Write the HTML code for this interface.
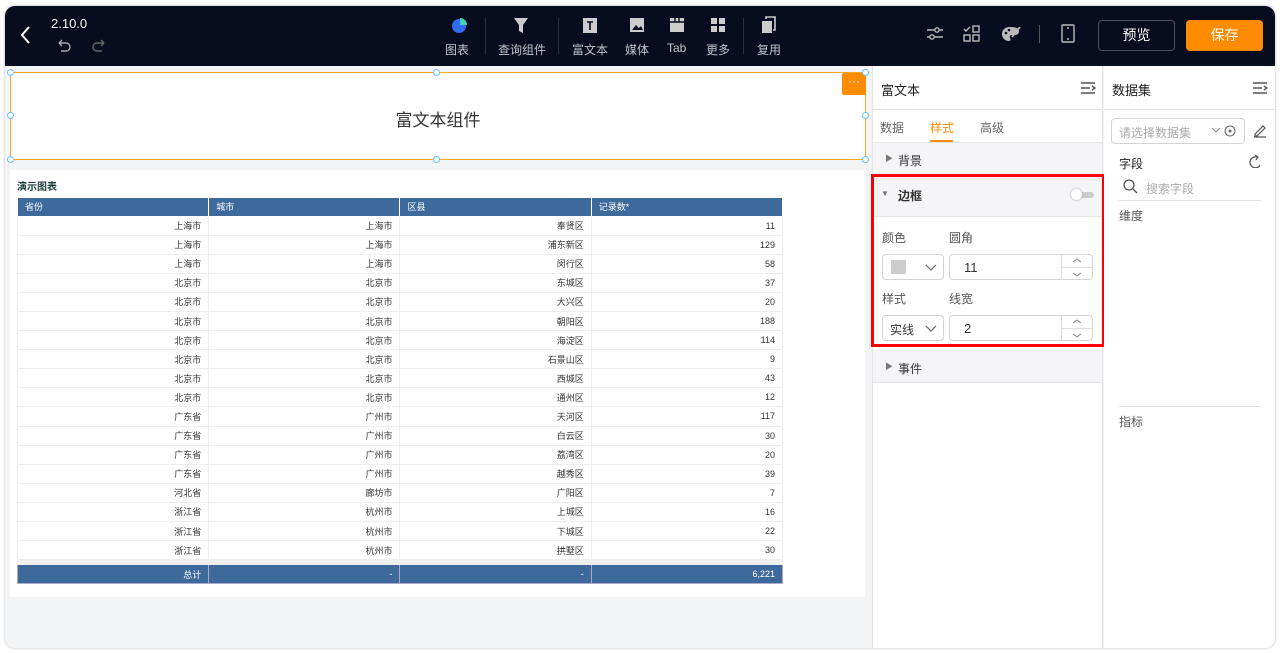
<!DOCTYPE html>
<html><head><meta charset="utf-8"><style>
*{box-sizing:border-box;margin:0;padding:0}
body{width:1280px;height:653px;background:#fff;font-family:"Liberation Sans","Noto Sans CJK SC",sans-serif;position:relative;overflow:hidden}
.a{position:absolute}
#frame{left:5px;top:6px;width:1270px;height:642px;border-radius:10px;overflow:hidden;background:#f3f4f6;box-shadow:0 0 3px #bbb}
#top{left:0;top:0;width:1270px;height:60px;background:#070d1e;color:#fff}
.tb{color:#bfc3cc;font-size:12px;text-align:center}
.sep{width:1px;background:#2b3142}
table{border-collapse:collapse;font-size:9px;font-family:"Liberation Sans","Noto Sans CJK SC",sans-serif}
td{height:19.1px;border:1px solid #eee;text-align:right;padding-right:7px;color:#333;width:191.5px}
th{height:18px;background:#3d6a9b;color:#fff;text-align:left;padding-left:7px;font-weight:normal;border:1px solid #fff;border-top:none}
.tot td{background:#3d6a9b;color:#fff;height:19px;border:1px solid #aac}
.h{width:7px;height:7px;border:1px solid #6bc1f2;border-radius:50%;background:#fff}
.lbl{font-size:12px;color:#555}
.box{border:1px solid #d4d4d4;border-radius:4px;background:#fff}
</style></head><body>
<div class="a" id="frame">
<div class="a" id="top">
 <svg class="a" style="left:15px;top:19px" width="12" height="20"><path d="M9 2L2 10l7 8" stroke="#fff" stroke-width="2" fill="none"/></svg>
 <div class="a" style="left:46px;top:10px;font-size:13px">2.10.0</div>
 <svg class="a" style="left:51px;top:33px" width="16" height="14"><path d="M3 4h7a4 4 0 010 8H5M3 4l3-3M3 4l3 3" stroke="#aaa" stroke-width="1.4" fill="none"/></svg>
 <svg class="a" style="left:86px;top:33px" width="16" height="14"><path d="M13 4H6a4 4 0 000 8h5M13 4l-3-3M13 4l-3 3" stroke="#666" stroke-width="1.4" fill="none"/></svg>
 <svg class="a" style="left:446px;top:11px" width="17" height="17"><circle cx="8" cy="9" r="7" fill="#2f6bf6"/><path d="M9 1a7 7 0 017 7H9z" fill="#3dd6b0"/></svg>
 <div class="a tb" style="left:440px;top:35px">图表</div>
 <div class="a sep" style="left:480px;top:12px;height:36px"></div>
 <svg class="a" style="left:508px;top:11px" width="16" height="17"><path d="M1 1h14l-5 7v8l-4-2V8z" fill="#ccc"/></svg>
 <div class="a tb" style="left:493px;top:35px">查询组件</div>
 <div class="a sep" style="left:553px;top:12px;height:36px"></div>
 <svg class="a" style="left:577px;top:11px" width="16" height="17"><rect x="1" y="1" width="14" height="15" fill="#ccc"/><path d="M5 5h6M8 5v8" stroke="#070d1e" stroke-width="1.6"/></svg>
 <div class="a tb" style="left:567px;top:35px">富文本</div>
 <svg class="a" style="left:624px;top:11px" width="16" height="16"><rect x="1" y="1" width="14" height="14" fill="#ccc"/><path d="M3 13l4-5 3 3 2-2 2 4z" fill="#070d1e"/></svg>
 <div class="a tb" style="left:620px;top:35px">媒体</div>
 <svg class="a" style="left:664px;top:11px" width="16" height="16"><rect x="1" y="1" width="14" height="14" fill="#ccc"/><path d="M1 5h14M6 1v4M10 1v4" stroke="#070d1e" stroke-width="1.4"/></svg>
 <div class="a tb" style="left:662px;top:35px">Tab</div>
 <svg class="a" style="left:705px;top:11px" width="16" height="16"><rect x="1" y="1" width="6" height="6" fill="#ccc"/><rect x="9" y="1" width="6" height="6" fill="#ccc"/><rect x="1" y="9" width="6" height="6" fill="#ccc"/><rect x="9" y="9" width="6" height="6" fill="#ccc"/></svg>
 <div class="a tb" style="left:701px;top:35px">更多</div>
 <div class="a sep" style="left:738px;top:12px;height:36px"></div>
 <svg class="a" style="left:756px;top:10px" width="16" height="18"><rect x="1" y="5" width="10" height="12" fill="#ccc"/><path d="M5 3V1h9v13h-2" stroke="#ccc" stroke-width="1.6" fill="none"/></svg>
 <div class="a tb" style="left:752px;top:35px">复用</div>
 <svg class="a" style="left:921px;top:20px" width="18" height="16"><path d="M1 4h16M1 11h16" stroke="#bbb" stroke-width="1.4"/><circle cx="11" cy="4" r="2.2" fill="#070d1e" stroke="#bbb" stroke-width="1.4"/><circle cx="6" cy="11" r="2.2" fill="#070d1e" stroke="#bbb" stroke-width="1.4"/></svg>
 <svg class="a" style="left:958px;top:19px" width="18" height="18"><path d="M1 4l2 2 4-4" stroke="#bbb" stroke-width="1.4" fill="none"/><rect x="10" y="1" width="6" height="6" stroke="#bbb" stroke-width="1.4" fill="none"/><rect x="1" y="10" width="6" height="6" stroke="#bbb" stroke-width="1.4" fill="none"/><rect x="10" y="10" width="6" height="6" stroke="#bbb" stroke-width="1.4" fill="none"/></svg>
 <svg class="a" style="left:996px;top:19px" width="20" height="18"><path d="M9 2C4 2 1 5 1 9s3 7 7 7c2 0 2-2 1-3s0-3 2-3h3c2 0 4-1 4-4S14 2 9 2z" fill="#bbb"/><circle cx="5" cy="8" r="1.3" fill="#070d1e"/><circle cx="8" cy="5" r="1.3" fill="#070d1e"/><path d="M11 12L19 2" stroke="#bbb" stroke-width="1.8"/></svg>
 <div class="a sep" style="left:1034px;top:19px;height:18px;background:#555"></div>
 <svg class="a" style="left:1056px;top:18px" width="14" height="19"><rect x="1" y="1" width="12" height="17" rx="1" stroke="#bbb" stroke-width="1.4" fill="none"/><path d="M6 4h2M6 15h2" stroke="#bbb" stroke-width="1.4"/></svg>
 <div class="a" style="left:1093px;top:14px;width:77px;height:31px;border:1px solid #4a5060;border-radius:4px;font-size:14px;text-align:center;line-height:29px">预览</div>
 <div class="a" style="left:1181px;top:14px;width:77px;height:31px;background:#ff8c00;border-radius:4px;font-size:14px;text-align:center;line-height:31px">保存</div>
</div>
<div class="a" style="left:5px;top:66px;width:856px;height:88px;background:#fff;border:1px solid #ffa726"></div>
<div class="a" style="left:0;top:100px;width:866px;text-align:center;font-size:17px;color:#333">富文本组件</div>
<div class="a" style="left:837px;top:67px;width:24px;height:22px;background:#ff8c00;border-radius:2px;color:#fff;font-size:12px;text-align:center;line-height:16px">···</div>
<div class="a h" style="left:2px;top:63px"></div><div class="a h" style="left:428px;top:63px"></div><div class="a h" style="left:857px;top:63px"></div>
<div class="a h" style="left:2px;top:106px"></div><div class="a h" style="left:857px;top:106px"></div>
<div class="a h" style="left:2px;top:150px"></div><div class="a h" style="left:428px;top:150px"></div><div class="a h" style="left:857px;top:150px"></div>
<div class="a" style="left:5px;top:164px;width:855px;height:427px;background:#fff"></div>
<div class="a" style="left:12px;top:172px;font-size:10px;font-weight:bold;color:#1f3d3d">演示图表</div>
<table class="a" style="left:12px;top:192px;width:766px">
<tr><th>省份</th><th>城市</th><th>区县</th><th>记录数*</th></tr>
<tr><td>上海市</td><td>上海市</td><td>奉贤区</td><td>11</td></tr>
<tr><td>上海市</td><td>上海市</td><td>浦东新区</td><td>129</td></tr>
<tr><td>上海市</td><td>上海市</td><td>闵行区</td><td>58</td></tr>
<tr><td>北京市</td><td>北京市</td><td>东城区</td><td>37</td></tr>
<tr><td>北京市</td><td>北京市</td><td>大兴区</td><td>20</td></tr>
<tr><td>北京市</td><td>北京市</td><td>朝阳区</td><td>188</td></tr>
<tr><td>北京市</td><td>北京市</td><td>海淀区</td><td>114</td></tr>
<tr><td>北京市</td><td>北京市</td><td>石景山区</td><td>9</td></tr>
<tr><td>北京市</td><td>北京市</td><td>西城区</td><td>43</td></tr>
<tr><td>北京市</td><td>北京市</td><td>通州区</td><td>12</td></tr>
<tr><td>广东省</td><td>广州市</td><td>天河区</td><td>117</td></tr>
<tr><td>广东省</td><td>广州市</td><td>白云区</td><td>30</td></tr>
<tr><td>广东省</td><td>广州市</td><td>荔湾区</td><td>20</td></tr>
<tr><td>广东省</td><td>广州市</td><td>越秀区</td><td>39</td></tr>
<tr><td>河北省</td><td>廊坊市</td><td>广阳区</td><td>7</td></tr>
<tr><td>浙江省</td><td>杭州市</td><td>上城区</td><td>16</td></tr>
<tr><td>浙江省</td><td>杭州市</td><td>下城区</td><td>22</td></tr>
<tr><td>浙江省</td><td>杭州市</td><td>拱墅区</td><td>30</td></tr>
<tr><td style="height:5px;background:#f0f0f0"></td><td style="height:5px;background:#f0f0f0"></td><td style="height:5px;background:#f0f0f0"></td><td style="height:5px;background:#f0f0f0"></td></tr>
<tr class="tot"><td>总计</td><td>-</td><td>-</td><td>6,221</td></tr>
</table>
<div class="a" style="left:867px;top:60px;width:231px;height:582px;background:#fff;border-left:1px solid #e5e5e5;border-right:1px solid #e5e5e5"></div>
<div class="a" style="left:876px;top:74px;font-size:13px;color:#222">富文本</div>
<svg class="a" style="left:1075px;top:76px" width="16" height="12"><path d="M1 1h14M1 6h9M1 11h14M12 4l3 2-3 2" stroke="#555" stroke-width="1.4" fill="none"/></svg>
<div class="a" style="left:868px;top:103px;width:229px;height:1px;background:#e5e5e5"></div>
<div class="a" style="left:875px;top:113px;font-size:12px;color:#666">数据</div>
<div class="a" style="left:925px;top:113px;font-size:12px;color:#ff8c00">样式</div>
<div class="a" style="left:925px;top:134px;width:23px;height:2px;background:#ff8c00"></div>
<div class="a" style="left:975px;top:113px;font-size:12px;color:#666">高级</div>
<div class="a" style="left:868px;top:136px;width:229px;height:34px;background:#f5f5f7;border-top:1px solid #e5e5e5"></div>
<div class="a" style="left:880px;top:147px;font-size:8px;color:#777">▶</div>
<div class="a" style="left:893px;top:146px;font-size:12px;color:#333">背景</div>
<div class="a" style="left:868px;top:171px;width:229px;height:40px;background:#f5f5f7;border-bottom:1px solid #e5e5e5"></div>
<div class="a" style="left:876px;top:183px;font-size:8px;color:#777">▼</div>
<div class="a" style="left:893px;top:181px;font-size:12px;color:#333;font-weight:bold">边框</div>
<div class="a" style="left:1071px;top:186px;width:18px;height:6px;background:#ccc;border-radius:3px"></div>
<div class="a" style="left:1066px;top:183px;width:11px;height:11px;background:#fff;border-radius:50%;box-shadow:0 0 2px #999"></div>
<div class="a lbl" style="left:877px;top:223px">颜色</div>
<div class="a lbl" style="left:944px;top:223px">圆角</div>
<div class="a box" style="left:877px;top:248px;width:62px;height:26px"></div>
<div class="a" style="left:886px;top:254px;width:15px;height:14px;background:#ccc"></div>
<svg class="a" style="left:920px;top:258px" width="12" height="7"><path d="M1 1l5 5 5-5" stroke="#666" stroke-width="1.2" fill="none"/></svg>
<div class="a box" style="left:944px;top:248px;width:144px;height:26px"></div>
<div class="a" style="left:1056px;top:248px;width:1px;height:26px;background:#ddd"></div>
<div class="a" style="left:1056px;top:261px;width:32px;height:1px;background:#ddd"></div>
<div class="a" style="left:959px;top:254px;font-size:13px;color:#333">11</div>
<div class="a lbl" style="left:877px;top:284px">样式</div>
<div class="a lbl" style="left:944px;top:284px">线宽</div>
<div class="a box" style="left:877px;top:309px;width:62px;height:26px"></div>
<div class="a" style="left:885px;top:315px;font-size:12px;color:#333">实线</div>
<svg class="a" style="left:920px;top:319px" width="12" height="7"><path d="M1 1l5 5 5-5" stroke="#666" stroke-width="1.2" fill="none"/></svg>
<div class="a box" style="left:944px;top:309px;width:144px;height:26px"></div>
<div class="a" style="left:1056px;top:309px;width:1px;height:26px;background:#ddd"></div>
<div class="a" style="left:1056px;top:322px;width:32px;height:1px;background:#ddd"></div>
<div class="a" style="left:959px;top:315px;font-size:13px;color:#333">2</div>
<svg class="a" style="left:1066px;top:250px" width="12" height="84"><path d="M2 6l4-3 4 3M2 17l4 3 4-3M2 67l4-3 4 3M2 78l4 3 4-3" stroke="#888" stroke-width="1" fill="none"/></svg>
<div class="a" style="left:866px;top:168px;width:234px;height:173px;border:3px solid #ff0000"></div>
<div class="a" style="left:868px;top:343px;width:229px;height:34px;background:#f5f5f7;border-bottom:1px solid #e5e5e5"></div>
<div class="a" style="left:880px;top:355px;font-size:8px;color:#777">▶</div>
<div class="a" style="left:893px;top:354px;font-size:12px;color:#333">事件</div>
<div class="a" style="left:1099px;top:60px;width:171px;height:582px;background:#fff"></div>
<div class="a" style="left:1107px;top:74px;font-size:13px;color:#222">数据集</div>
<svg class="a" style="left:1247px;top:76px" width="16" height="12"><path d="M1 1h14M1 6h9M1 11h14M12 4l3 2-3 2" stroke="#555" stroke-width="1.4" fill="none"/></svg>
<div class="a" style="left:1099px;top:103px;width:171px;height:1px;background:#e5e5e5"></div>
<div class="a box" style="left:1106px;top:112px;width:134px;height:26px"></div>
<div class="a" style="left:1114px;top:118px;font-size:12px;color:#aaa">请选择数据集</div>
<svg class="a" style="left:1206px;top:119px" width="30" height="12"><path d="M1 3l4 4 4-4" stroke="#888" stroke-width="1" fill="none"/><circle cx="19" cy="6" r="5" stroke="#666" fill="none"/><circle cx="19" cy="6" r="1.5" fill="#666"/></svg>
<svg class="a" style="left:1248px;top:118px" width="14" height="14"><path d="M2 10l8-8 2 2-8 8H2zM1 13h12" stroke="#555" stroke-width="1.2" fill="none"/></svg>
<div class="a" style="left:1114px;top:149px;font-size:12px;color:#222">字段</div>
<svg class="a" style="left:1241px;top:148px" width="14" height="14"><path d="M11 3a5.5 5.5 0 104 5" stroke="#555" stroke-width="1.3" fill="none"/><path d="M9 1l3 2-2 3" stroke="#555" stroke-width="1.3" fill="none"/></svg>
<svg class="a" style="left:1118px;top:173px" width="15" height="15"><circle cx="6" cy="6" r="5" stroke="#555" stroke-width="1.3" fill="none"/><path d="M10 10l4 4" stroke="#555" stroke-width="1.3"/></svg>
<div class="a" style="left:1141px;top:174px;font-size:12px;color:#aaa">搜索字段</div>
<div class="a" style="left:1114px;top:194px;width:142px;height:1px;background:#e0e0e0"></div>
<div class="a" style="left:1114px;top:201px;font-size:12px;color:#555">维度</div>
<div class="a" style="left:1114px;top:400px;width:142px;height:1px;background:#e0e0e0"></div>
<div class="a" style="left:1114px;top:407px;font-size:12px;color:#555">指标</div>
</div>
</body></html>
